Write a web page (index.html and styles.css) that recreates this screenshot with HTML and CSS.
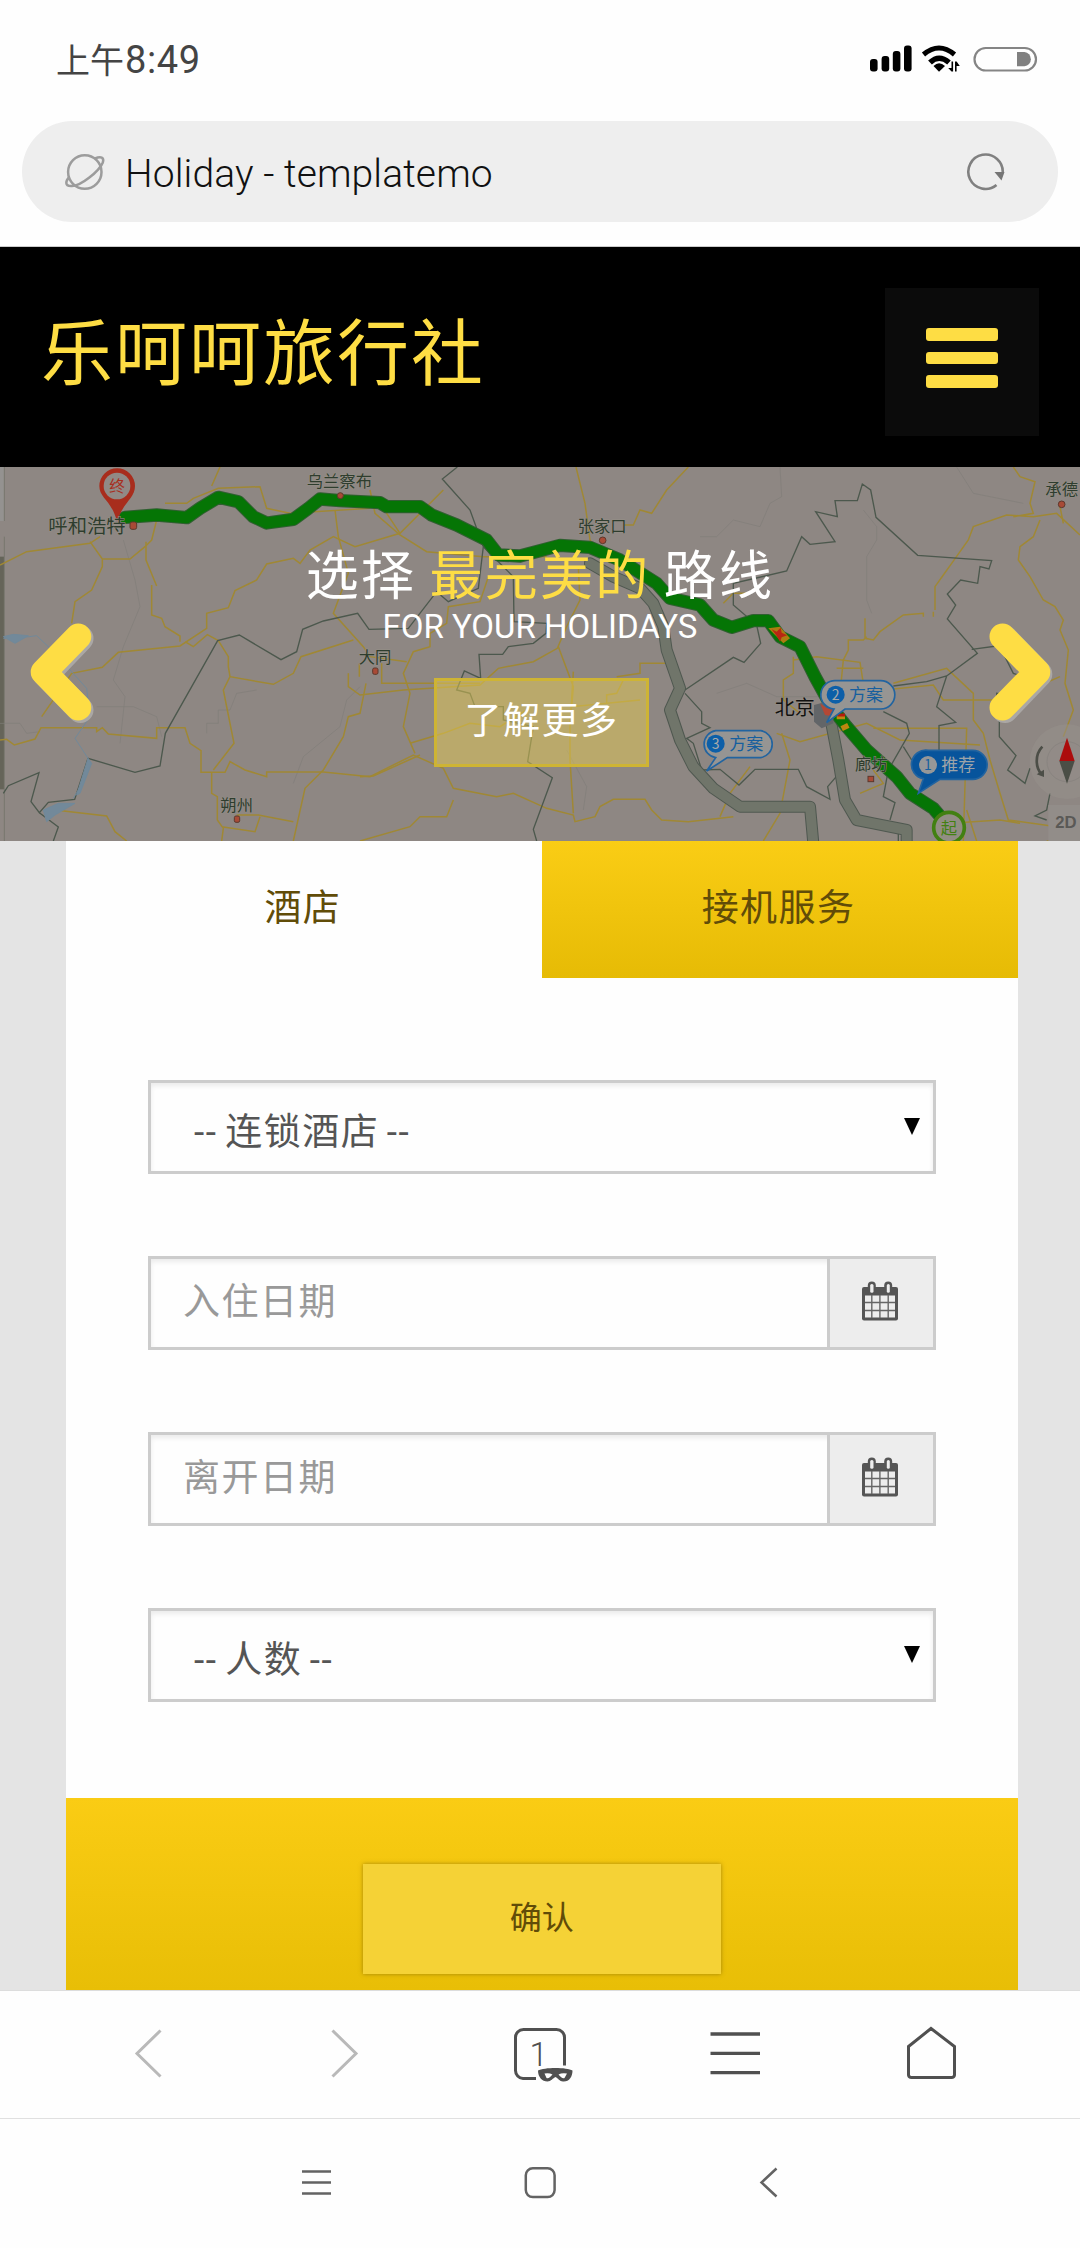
FILE: index.html
```html
<!DOCTYPE html>
<html lang="zh-CN">
<head>
<meta charset="utf-8">
<title>Holiday - templatemo</title>
<link rel="stylesheet" href="styles.css">
</head>
<body>
<div class="status">
  <span class="clock">上午<span class="digits">8:49</span></span>
  <svg class="status-icons" width="168" height="30" viewBox="870 43 168 30">
    <rect x="870" y="58" width="7.6" height="12.5" rx="3"/>
    <rect x="881.6" y="55" width="7.6" height="15.5" rx="3"/>
    <rect x="892.8" y="50" width="7.6" height="20.5" rx="3"/>
    <rect x="904" y="44.5" width="7.6" height="26" rx="3"/>
    <g fill="none" stroke="#000" stroke-width="5">
      <path d="M923.5 53.500Q939 40.500 954.500 53.500"/>
      <path d="M930 61.500Q939 53 949 61.500" stroke-width="5.500"/>
    </g>
    <path d="M933.500 65Q939 59.500 945 65L939 70.800Z"/>
    <path d="M951.500 60.500h1.600v10h-1.600l-3.300-3.500h3.300zM955 70.500h1.600V65h3.200l-3.200-4.500H955z"/>
    <rect x="974.500" y="47" width="61.500" height="22.500" rx="11.250" fill="none" stroke="#858585" stroke-width="2.200"/>
    <path d="M1017 51h7.500a7.200 7.200 0 0 1 0 14.300H1017z" fill="#808080"/>
  </svg>
</div>
<div class="address">
  <svg width="42" height="38" viewBox="64 153 42 38" fill="none" stroke="#9c9c9c" stroke-width="2.500">
    <circle cx="84.800" cy="172" r="16.700"/>
    <path d="M95 158.500C101 156 104.500 157.500 102.800 162.500C99.500 171 80 187 71 186C64.500 186 65.500 181 69.500 177"/>
  </svg>
  <span class="page-title">Holiday - templatemo</span>
  <svg width="40" height="40" viewBox="966 151 40 40">
    <path d="M996.500 184A17.200 17.200 0 1 1 1002.700 172" fill="none" stroke="#808080" stroke-width="2.600"/>
    <path d="M994.500 171H1004.500L1001.500 179.500Z" fill="#757575"/>
  </svg>
</div>
<header class="site-header">
  <h1>乐呵呵旅行社</h1>
  <div class="menu"><i></i><i></i><i></i></div>
</header>
<section class="hero">
  <svg class="map" width="1080" height="374" viewBox="0 21 3240 1122">
    <rect y="21" width="3240" height="1122" fill="#8e8783"/>
    <rect y="21" width="12" height="162" fill="#949290"/>
    <rect y="290" width="12" height="698" fill="#656459"/>
    <path d="M13 21V183M13 230V1143" stroke="#77766e" stroke-width="3"/>
    <g class="faint">
      <path d="M370 240L405 360L420 440L370 560L340 660L375 710L360 850M290 740H400L470 770L485 830M620 820V790H655V750L690 750L710 700L770 690M880 970L910 890L1020 800L1040 720L1080 680"/>
      <path d="M2100 230H2150L2200 180L2280 200L2310 130L2345 110L2340 21M2590 150L2630 200V240L2600 290V420L2615 460M2870 21L2920 100L3070 130M1700 870L1760 980L1750 1050M2150 700L2240 670L2330 710H2470M0 790H60L80 820L120 815"/>
    </g>
    <g class="road">
      <path d="M0 315L80 275L270 250L300 230M270 245L307 297H390L435 260L455 240L470 180M438 245V300L470 378M455 375V465L485 475L495 500L540 528V545M307 297V320L275 390L225 425L215 490M495 130H560L580 115L655 85L780 80L800 145L870 160L1110 145M660 21L635 78"/>
      <path d="M0 840L20 838L43 855L105 837L123 803H290V815L307 803L325 822L470 835V803H555L570 850L603 872V937H675L690 905L735 930L800 950V936H970L1110 950L1240 885L1330 925L1360 985L1490 1010L1540 1000L1640 1045L1720 1065L1725 1085L1785 1070L1800 1040L1840 1018H1935L1955 1050L1985 1080L2065 1085L2200 1070"/>
      <path d="M635 937V1000L652 1010V1080L670 1105L665 1143M665 1100L765 1115L780 1070M710 1065H775L880 1085M165 1050L320 1068L345 1115L380 1143M125 770L215 640L307 622L355 577L540 558L620 505V460L685 443L705 392L770 360L800 312L880 295L900 310L930 270L1000 230L1065 260L1200 220L1330 90M555 545L580 560L622 524L655 542L685 590V620L690 650L820 673L880 640L903 590L1060 540M690 650L670 690L702 850L640 930"/>
      <path d="M1005 150L1015 230L1045 340L1000 460L1090 560L1110 590L1220 605M1078 610V650M1045 640V680L1080 705L1210 690L1440 675L1495 625L1600 605L1672 565L1700 500L1740 420L1735 320M1145 610V670H1440M1098 670L1080 760L1045 770L1030 830L970 930L915 985L880 1143M1110 90L1125 160L1200 225L1280 275L1450 290H1640M1150 145L1200 220M1465 350L1440 425L1345 440L1340 490L1290 520V560L1240 575L1210 640L1230 700L1210 800L1245 880M1720 635L1710 800V900L1720 1060M1675 560L1720 680L1715 740L1920 720M1820 730V705L1850 700L1870 660"/>
      <path d="M1728 21L1755 130L1770 240L1830 310M2065 21L2000 90L1955 160L1920 150L1900 195H1870M1080 950L1120 948L1260 885M1080 1143L1230 1100L1260 1070H1340L1360 1020M1230 850L1330 820L1410 790L1500 800L1580 750M2010 610H1920V640L1850 650M2170 430L2200 400L2240 400L2280 380M2160 1070L2190 1000L2250 920"/>
      <path d="M2595 475V535L2620 540L2640 515L2710 465L2770 460V470M2800 470V455M2805 450V380L2830 345L2855 310L2905 240L2920 200L3020 165L3100 170L3170 160L3240 225M3040 21L3060 50L3105 65L3090 130L3100 160L3040 170M3180 140L3190 190M3120 180L3100 230L3060 260L3055 300L3090 350L3130 420L3165 440L3190 480L3180 510L3205 570L3195 670L3220 750L3190 830M2600 530L2590 540H2545V570L2530 600L2520 700"/>
      <path d="M2380 600L2450 590L2580 607L2590 670M2510 625H2590M2380 590V640L2350 660V720L2400 760M2680 670L2840 625L2920 700V780L2950 820L2970 900L3000 1000L3025 1080L3240 1110M2650 690L2800 675L2830 720H3020L3180 650M2620 805H2900L2890 1143M2330 820L2400 845L2600 790L2700 840L2940 855M2290 1143L2340 1060L2370 900L2345 820M2850 1090L3000 1080L3060 1090M2620 930L2650 970L2580 1000M2900 1050L2930 1143M3140 1143H3230"/>
    </g>
    <g class="border">
      <path d="M10 1000L25 977L117 938L93 1025L118 1058L145 1027L224 1018L264 895L405 937L480 918L496 820L653 542L718 525L843 599L890 575L908 508L970 483L1073 460L1107 508L1225 505L1310 395L1345 425L1435 385L1450 260L1410 150L1327 57L1372 21M118 1058L175 1101L160 1143"/>
      <path d="M1450 260L1540 350L1542 485L1640 490L1638 520L1600 550L1525 560L1508 583H1437L1442 655L1393 633L1370 690L1410 700L1425 740H1510V780L1600 800L1583 905L1657 953L1600 1108L1610 1143"/>
      <path d="M2055 690L2200 592L2232 607L2282 550L2270 495L2200 435V370L2360 333L2405 230L2430 253L2505 245L2447 155L2512 170L2505 122H2572L2587 72L2612 90L2628 172L2753 286L2975 302L2967 327L2940 320L2933 370L2882 360L2842 402L2867 435L2842 477L2932 580L2840 648L2780 665L2680 678M2840 648L2810 740L2867 787L2817 797V870M2915 568L2990 558L3010 580L3040 640L3070 650M2990 715V700L3100 715M2998 770V830L3048 887L3023 930L3075 970L3090 925M2055 700L2105 755V790L2130 803L2060 835L2080 850L2105 930L2160 928L2217 975L2265 928H2395L2420 980L2490 1018L2483 980L2530 925M2650 755L2720 790L2728 820L2665 930L2650 1010L2685 1028L2670 1080M2710 860L2735 900M3150 1000L3140 1050L3105 1068L3140 1080M2695 1143V1120"/>
    </g>
    <g class="water">
      <path d="M10 535H50L110 527L150 565L215 635L260 685L270 770L225 835L264 895L258 950L220 1015"/>
      <path d="M10 530L45 550L85 527L40 523ZM130 1050L175 1030H225L165 1065L140 1085ZM264 895L275 910L240 1000L230 1005Z" fill="#72899a"/>
    </g>
    <g class="alt-shadow">
      <path d="M1770 310L1840 350L1920 385L1960 430L1990 500L2000 570L2040 685L2010 750L2040 840L2080 920L2140 985L2220 1040H2430L2440 1150"/>
      <path d="M2490 770L2515 900L2535 1020L2570 1080L2620 1090L2720 1110V1150"/>
    </g>
    <g class="alt">
      <path d="M1770 310L1840 350L1920 385L1960 430L1990 500L2000 570L2040 685L2010 750L2040 840L2080 920L2140 985L2220 1040H2430L2440 1150"/>
      <path d="M2490 770L2515 900L2535 1020L2570 1080L2620 1090L2720 1110V1150"/>
    </g>
    <path class="main-shadow" d="M375 172L470 165L560 173L600 145L655 112L715 125L760 170L800 189L880 178L925 145L960 117L1020 122L1140 128L1160 140H1260L1295 165L1370 195L1460 240L1495 285L1560 288L1680 256L1770 262L1860 300L1970 370L2010 415L2100 435L2140 480L2195 502L2260 482L2305 482L2340 530L2400 560L2445 650L2500 750L2540 800L2600 870L2690 950L2730 1000L2800 1045L2830 1080"/>
    <path class="main-route" d="M375 172L470 165L560 173L600 145L655 112L715 125L760 170L800 189L880 178L925 145L960 117L1020 122L1140 128L1160 140H1260L1295 165L1370 195L1460 240L1495 285L1560 288L1680 256L1770 262L1860 300L1970 370L2010 415L2100 435L2140 480L2195 502L2260 482L2305 482L2340 530L2400 560L2445 650L2500 750L2540 800L2600 870L2690 950L2730 1000L2800 1045L2830 1080"/>
    <path d="M2305 505L2340 500L2370 535L2350 550Z" fill="#ad7b11"/>
    <path d="M2315 508L2330 515L2342 503L2345 518L2362 526L2345 532L2340 545L2330 528Z" fill="#b92613"/>
    <path d="M2442 735L2500 720V790L2465 805L2442 785Z" fill="#626568"/>
    <path d="M2460 730L2480 745L2510 742L2505 770L2475 765Z" fill="#b34835"/>
    <path d="M2510 770H2535M2525 806L2545 796" stroke="#bd8610" stroke-width="16"/>
    <path d="M2512 765H2535" stroke="#b51b0d" stroke-width="9"/>
    <path d="M351 185C335 120 298 115 298 78A53 53 0 0 1 405 78C405 115 370 125 351 185Z" fill="#a82d1d"/>
    <circle cx="351" cy="78" r="40" fill="#918a86"/>
    <text x="351" y="96" font-size="47" fill="#a82d1d" text-anchor="middle">终</text>
    <g class="stop">
      <rect x="390" y="186" width="20" height="22" rx="6"/>
      <circle cx="1021" cy="107" r="9"/><rect x="1118" y="624" width="16" height="19" rx="5"/>
      <rect x="703" y="1068" width="16" height="19" rx="5"/><circle cx="1808" cy="241" r="10"/>
      <circle cx="3185" cy="133" r="10"/><rect x="2604" y="949" width="17" height="16"/>
    </g>
    <g class="place">
      <text x="145" y="218" font-size="58">呼和浩特</text>
      <text x="920" y="81">乌兰察布</text>
      <text x="1076" y="610">大同</text>
      <text x="661" y="1052">朔州</text>
      <text x="1733" y="215">张家口</text>
      <text x="3136" y="106">承德</text>
      <text x="2565" y="930">廊坊</text>
      <text x="2324" y="764" font-size="60" fill="#111">北京</text>
    </g>
    <g class="bubble">
      <path d="M2508 662H2642A42 42 0 0 1 2642 747H2535L2480 788L2502 747A42 42 0 0 1 2508 662Z"/>
      <path d="M2147 812H2282A41 41 0 0 1 2282 893H2182L2120 933L2147 893A41 41 0 0 1 2147 812Z"/>
      <path d="M2785 871H2918A43 43 0 0 1 2918 958H2820L2755 1000L2770 956A43 43 0 0 1 2785 871Z" fill="#07549c"/>
    </g>
    <circle cx="2507" cy="704" r="27" fill="#0c5fa8"/>
    <circle cx="2147" cy="851" r="27" fill="#0c5fa8"/>
    <circle cx="2784" cy="915" r="27" fill="#969798"/>
    <g class="bubble-text">
      <text x="2507" y="719" font-size="42" fill="#aaa" text-anchor="middle">2</text>
      <text x="2547" y="723">方案</text>
      <text x="2147" y="866" font-size="42" fill="#aaa" text-anchor="middle">3</text>
      <text x="2188" y="871">方案</text>
      <text x="2784" y="931" font-size="42" text-anchor="middle">1</text>
      <text x="2824" y="934" fill="#9ca3a8">推荐</text>
    </g>
    <circle cx="2847" cy="1103" r="46" fill="#928e83" stroke="#428011" stroke-width="11"/>
    <text x="2847" y="1121" font-size="49" fill="#428011" text-anchor="middle">起</text>
    <circle cx="3201" cy="905" r="112" fill="#958f8b" opacity=".55"/>
    <circle cx="3201" cy="905" r="60" fill="#928b87" stroke="#898480" stroke-width="3"/>
    <path d="M3201 833L3224 903H3178Z" fill="#ac0c0c"/>
    <path d="M3201 971L3224 903H3178Z" fill="#4b4e46"/>
    <path d="M3127 860C3103 885 3107 925 3125 943" fill="none" stroke="#4c4e47" stroke-width="8"/>
    <path d="M3110 943L3132 929V951Z" fill="#4c4e47"/>
    <rect x="3145" y="1035" width="95" height="108" fill="#928d89"/>
    <text x="3166" y="1103" font-family="Liberation Sans, sans-serif" font-weight="bold" font-size="50" fill="#5a5956">2D</text>
  </svg>
  <div class="caption">
    <h2>选择 <em>最完美的</em> 路线</h2>
    <h3>FOR YOUR HOLIDAYS</h3>
    <a class="more">了解更多</a>
  </div>
  <svg class="arrow prev" width="66" height="104" viewBox="0 0 66 104"><path class="arrow-shade" d="M50.500 18.500L16 54.500L50.500 90"/><path d="M48.300 16.500L13.700 52L48.300 87.500"/></svg>
  <svg class="arrow next" width="66" height="104" viewBox="0 0 66 104"><path class="arrow-shade" d="M17 18.500L51.300 54L17 90"/><path d="M14.500 16.500L49.300 52L14.500 87.500"/></svg>
</section>
<main class="booking">
  <div class="panel">
    <div class="tabs"><div class="tab">酒店</div><div class="tab inactive">接机服务</div></div>
    <div class="fields">
      <div class="field select"><span>-- 连锁酒店 --</span><i class="caret"></i></div>
      <div class="field date"><span>入住日期</span><div class="addon"><svg width="36" height="40"><use href="#calendar"/></svg></div></div>
      <div class="field date"><span>离开日期</span><div class="addon"><svg width="36" height="40"><use href="#calendar"/></svg></div></div>
      <div class="field select"><span>-- 人数 --</span><i class="caret"></i></div>
    </div>
    <div class="submit"><div class="confirm">确认</div></div>
  </div>
</main>
<nav class="toolbar">
  <svg width="1080" height="70" viewBox="0 2019 1080 70" fill="none" stroke="#505050" stroke-width="3">
    <g stroke="#b9b9b9"><path d="M160.500 2030.500L137 2053.500L160.500 2076.500M332.500 2030.500L356 2053.500L332.500 2076.500"/></g>
    <path d="M536 2078.500H523A8 8 0 0 1 515.500 2070.500V2038A8 8 0 0 1 523.500 2029.500H556.500A8 8 0 0 1 564.500 2038V2065.500"/>
    <path d="M538 2070.500C544 2067 567 2067 572.500 2070.500C572.500 2077 569 2082 563 2081.500C559.500 2081.500 558 2078 555.500 2077C553 2078 551 2081.500 547.500 2081.500C542 2081.500 538 2077 538 2070.500Z" fill="#505050" stroke="none"/>
    <path d="M544.500 2073.500Q549 2072.500 552.500 2074.500Q549 2079 546.500 2078ZM558.500 2074.500Q562 2072.500 567 2073.500L564.500 2078Q562 2079 558.500 2074.500Z" fill="#fff" stroke="none"/>
    <text x="529.500" y="2066" font-family="Roboto" font-weight="300" font-size="33" fill="#505050" stroke="none">1</text>
    <path d="M710.500 2034H760M710.500 2053.300H760M710.500 2072.600H760" stroke-width="3.300"/>
    <path d="M908.500 2046.500L931 2028.500L954.500 2046.500V2075A3 3 0 0 1 951.500 2077.500H911.500A3 3 0 0 1 908.500 2075Z"/>
  </svg>
</nav>
<footer class="system-nav">
  <svg width="480" height="40" viewBox="300 2162 480 40" fill="none" stroke="#636363" stroke-width="2.500">
    <path d="M302 2171.500H331M302 2182.500H331M302 2193.500H331"/>
    <rect x="525.800" y="2168.300" width="28.800" height="28.800" rx="7"/>
    <path d="M776.500 2168.500L761.500 2182.500L776.500 2196.500"/>
  </svg>
</footer>
<svg class="defs" width="0" height="0">
  <symbol id="calendar" viewBox="0 0 36 40">
    <path d="M2 6H34Q36 6 36 8V37.500Q36 39.500 34 39.500H2Q0 39.500 0 37.500V8Q0 6 2 6Z" fill="#555"/>
    <path d="M3 14.500H33V36.500H3Z" fill="#ededed"/>
    <path d="M9.800 14V37M17.900 14V37M26.200 14V37M3 21.500H33M3 29.500H33" stroke="#666" stroke-width="1.400"/>
    <rect x="5.800" y=".5" width="8" height="12.500" rx="4" fill="#555"/><rect x="22.200" y=".5" width="8" height="12.500" rx="4" fill="#555"/>
    <rect x="8.200" y="3" width="3.300" height="8.800" rx="1.500" fill="#ededed"/><rect x="24.800" y="3" width="3" height="8.800" rx="1.500" fill="#ededed"/>
  </symbol>
</svg>
</body>
</html>
```
FILE: styles.css
```css
* { box-sizing: border-box; }
body {
  margin: 0;
  width: 1080px;
  height: 2248px;
  overflow: hidden;
  display: flex;
  flex-direction: column;
  background: #fefefe;
  color: #555;
  font-family: Roboto, "Noto Sans CJK SC", sans-serif;
  font-weight: 400;
}
svg { display: block; flex: none; }
h1, h2, h3 { margin: 0; font-weight: 400; }
em, i { font-style: normal; }

.status {
  height: 121px;
  padding: 0 42px 4px 56px;
  display: flex;
  align-items: center;
  justify-content: space-between;
}
.clock { padding-top: 2px; font-size: 34px; line-height: 50px; color: #444; font-family: "Noto Sans CJK SC", sans-serif; white-space: nowrap; }
.digits { font-family: Roboto, sans-serif; font-size: 38px; letter-spacing: .6px; margin-left: 1px; }

.address {
  height: 101px;
  margin: 0 22px 24px;
  padding: 0 52px 0 42px;
  border-radius: 51px;
  background: #eee;
  display: flex;
  align-items: center;
}
.page-title { flex: 1; padding: 4px 0 0 19px; font-size: 39px; line-height: 46px; font-weight: 300; letter-spacing: .1px; color: #111; white-space: nowrap; }

.site-header {
  height: 221px;
  border-top: 1px solid #ccc;
  padding: 0 41px 0 41px;
  background: #000;
  display: flex;
  align-items: center;
  justify-content: space-between;
}
.site-header h1 { margin-bottom: 4px; font-size: 72px; line-height: 100px; letter-spacing: 2px; color: #fedd44; white-space: nowrap; }
.menu {
  width: 154px;
  height: 148px;
  margin-top: 10px;
  padding: 40px 41px 0;
  background: #0b0b0b;
  display: flex;
  flex-direction: column;
  gap: 11px;
}
.menu i { flex: none; height: 12.500px; border-radius: 3px; background: #fedd44; }

.hero { position: relative; height: 374px; flex: none; color: #fff; overflow: hidden; }
.map { position: absolute; inset: 0; font-family: "Noto Sans CJK SC", sans-serif; font-weight: 400; }
.faint path { fill: none; stroke: #817d79; stroke-width: 2; }
.road path { fill: none; stroke: #a08834; stroke-width: 4.500; }
.border path { fill: none; stroke: #4c584d; stroke-width: 4; }
.water path { stroke: #71899a; stroke-width: 3; }
.water path:first-child { fill: none; }
.alt, .alt-shadow, .main-route, .main-shadow { fill: none; stroke-linejoin: round; stroke-linecap: round; }
.alt { stroke: #70756a; stroke-width: 30; }
.alt-shadow { stroke: #4f5850; stroke-width: 36; }
.main-route { stroke: #057505; stroke-width: 34; }
.main-shadow { stroke: #315f32; stroke-width: 40; }
.stop { fill: #a84a36; stroke: #5d382c; stroke-width: 3; }
.place { font-size: 49px; fill: #2e3d2e; paint-order: stroke; stroke: #969088; stroke-width: 3; }
.bubble path { fill: #969593; stroke: #2264a0; stroke-width: 5; }
.bubble path:last-child { fill: #07549c; }
.bubble-text { font-size: 51px; fill: #175f9e; }
.caption { position: relative; display: flex; flex-direction: column; align-items: center; }
.caption h2 { margin-top: 70px; font-size: 53px; line-height: 80px; letter-spacing: 2.200px; word-spacing: -2px; white-space: nowrap; }
.caption em { color: #fedd44; }
.caption h3 { margin-top: -10px; font-size: 33px; line-height: 40px; white-space: nowrap; }
.more {
  width: 215px;
  height: 89px;
  margin-top: 31px;
  margin-left: 3px;
  border: 3px solid #ceb434;
  background: rgba(230, 204, 84, .5);
  text-align: center;
  font-size: 37px;
  line-height: 82px;
  letter-spacing: 1.500px;
}
.arrow { position: absolute; top: 153px; fill: none; stroke: #fedd44; stroke-width: 26; stroke-linejoin: round; stroke-linecap: round; }
.arrow-shade { stroke: #aaa7a5; }
.prev { left: 30px; }
.next { right: 26px; }

.booking { height: 1150px; flex: none; background: #e4e4e4; padding: 0 62.500px 0 66px; border-bottom: 1px solid #ddd; }
.panel { height: 1149px; background: #fefefe; display: flex; flex-direction: column; }
.tabs { height: 137px; display: grid; grid-template-columns: 1fr 1fr; font-size: 37px; letter-spacing: 1.500px; color: #614c08; }
.tab { padding: 0 2px 9px 0; display: flex; align-items: center; justify-content: center; }
.inactive { background: linear-gradient(#facd15, #e6bb05); }
.fields { padding: 102px 82px 0; display: flex; flex-direction: column; gap: 82px; }
.field {
  height: 94px;
  border: 3px solid #ccc;
  box-shadow: inset 0 3px 5px rgba(0, 0, 0, .08);
  display: flex;
  align-items: center;
  justify-content: space-between;
  font-size: 37px;
  letter-spacing: 1.500px;
  white-space: nowrap;
}
.select { padding: 0 13px 0 43px; }
.select span { padding-top: 3px; word-spacing: -3px; }
.caret { width: 0; height: 0; margin-bottom: 2px; border: solid transparent; border-width: 17px 8.500px 0; border-top-color: #000; }
.date { padding-left: 32px; color: #999; }
.date span { padding-bottom: 9px; }
.addon { width: 106px; height: 88px; border-left: 3px solid #ccc; background: #ededed; padding: 22px 0 0 32px; }
.submit { margin-top: auto; height: 192px; background: linear-gradient(#facc14, #e8be06); padding-top: 66px; }
.confirm {
  width: 358px;
  height: 110px;
  margin: 0 auto;
  background: #f5d236;
  box-shadow: 0 0 4px rgba(90, 70, 0, .5);
  text-align: center;
  color: #614c08;
  font-size: 32px;
  line-height: 109px;
}

.toolbar { height: 128px; flex: none; border-bottom: 1px solid #e0e0e0; padding-top: 28px; }
.system-nav { flex: 1; padding: 43px 0 0 300px; }
.defs { position: absolute; }
```
